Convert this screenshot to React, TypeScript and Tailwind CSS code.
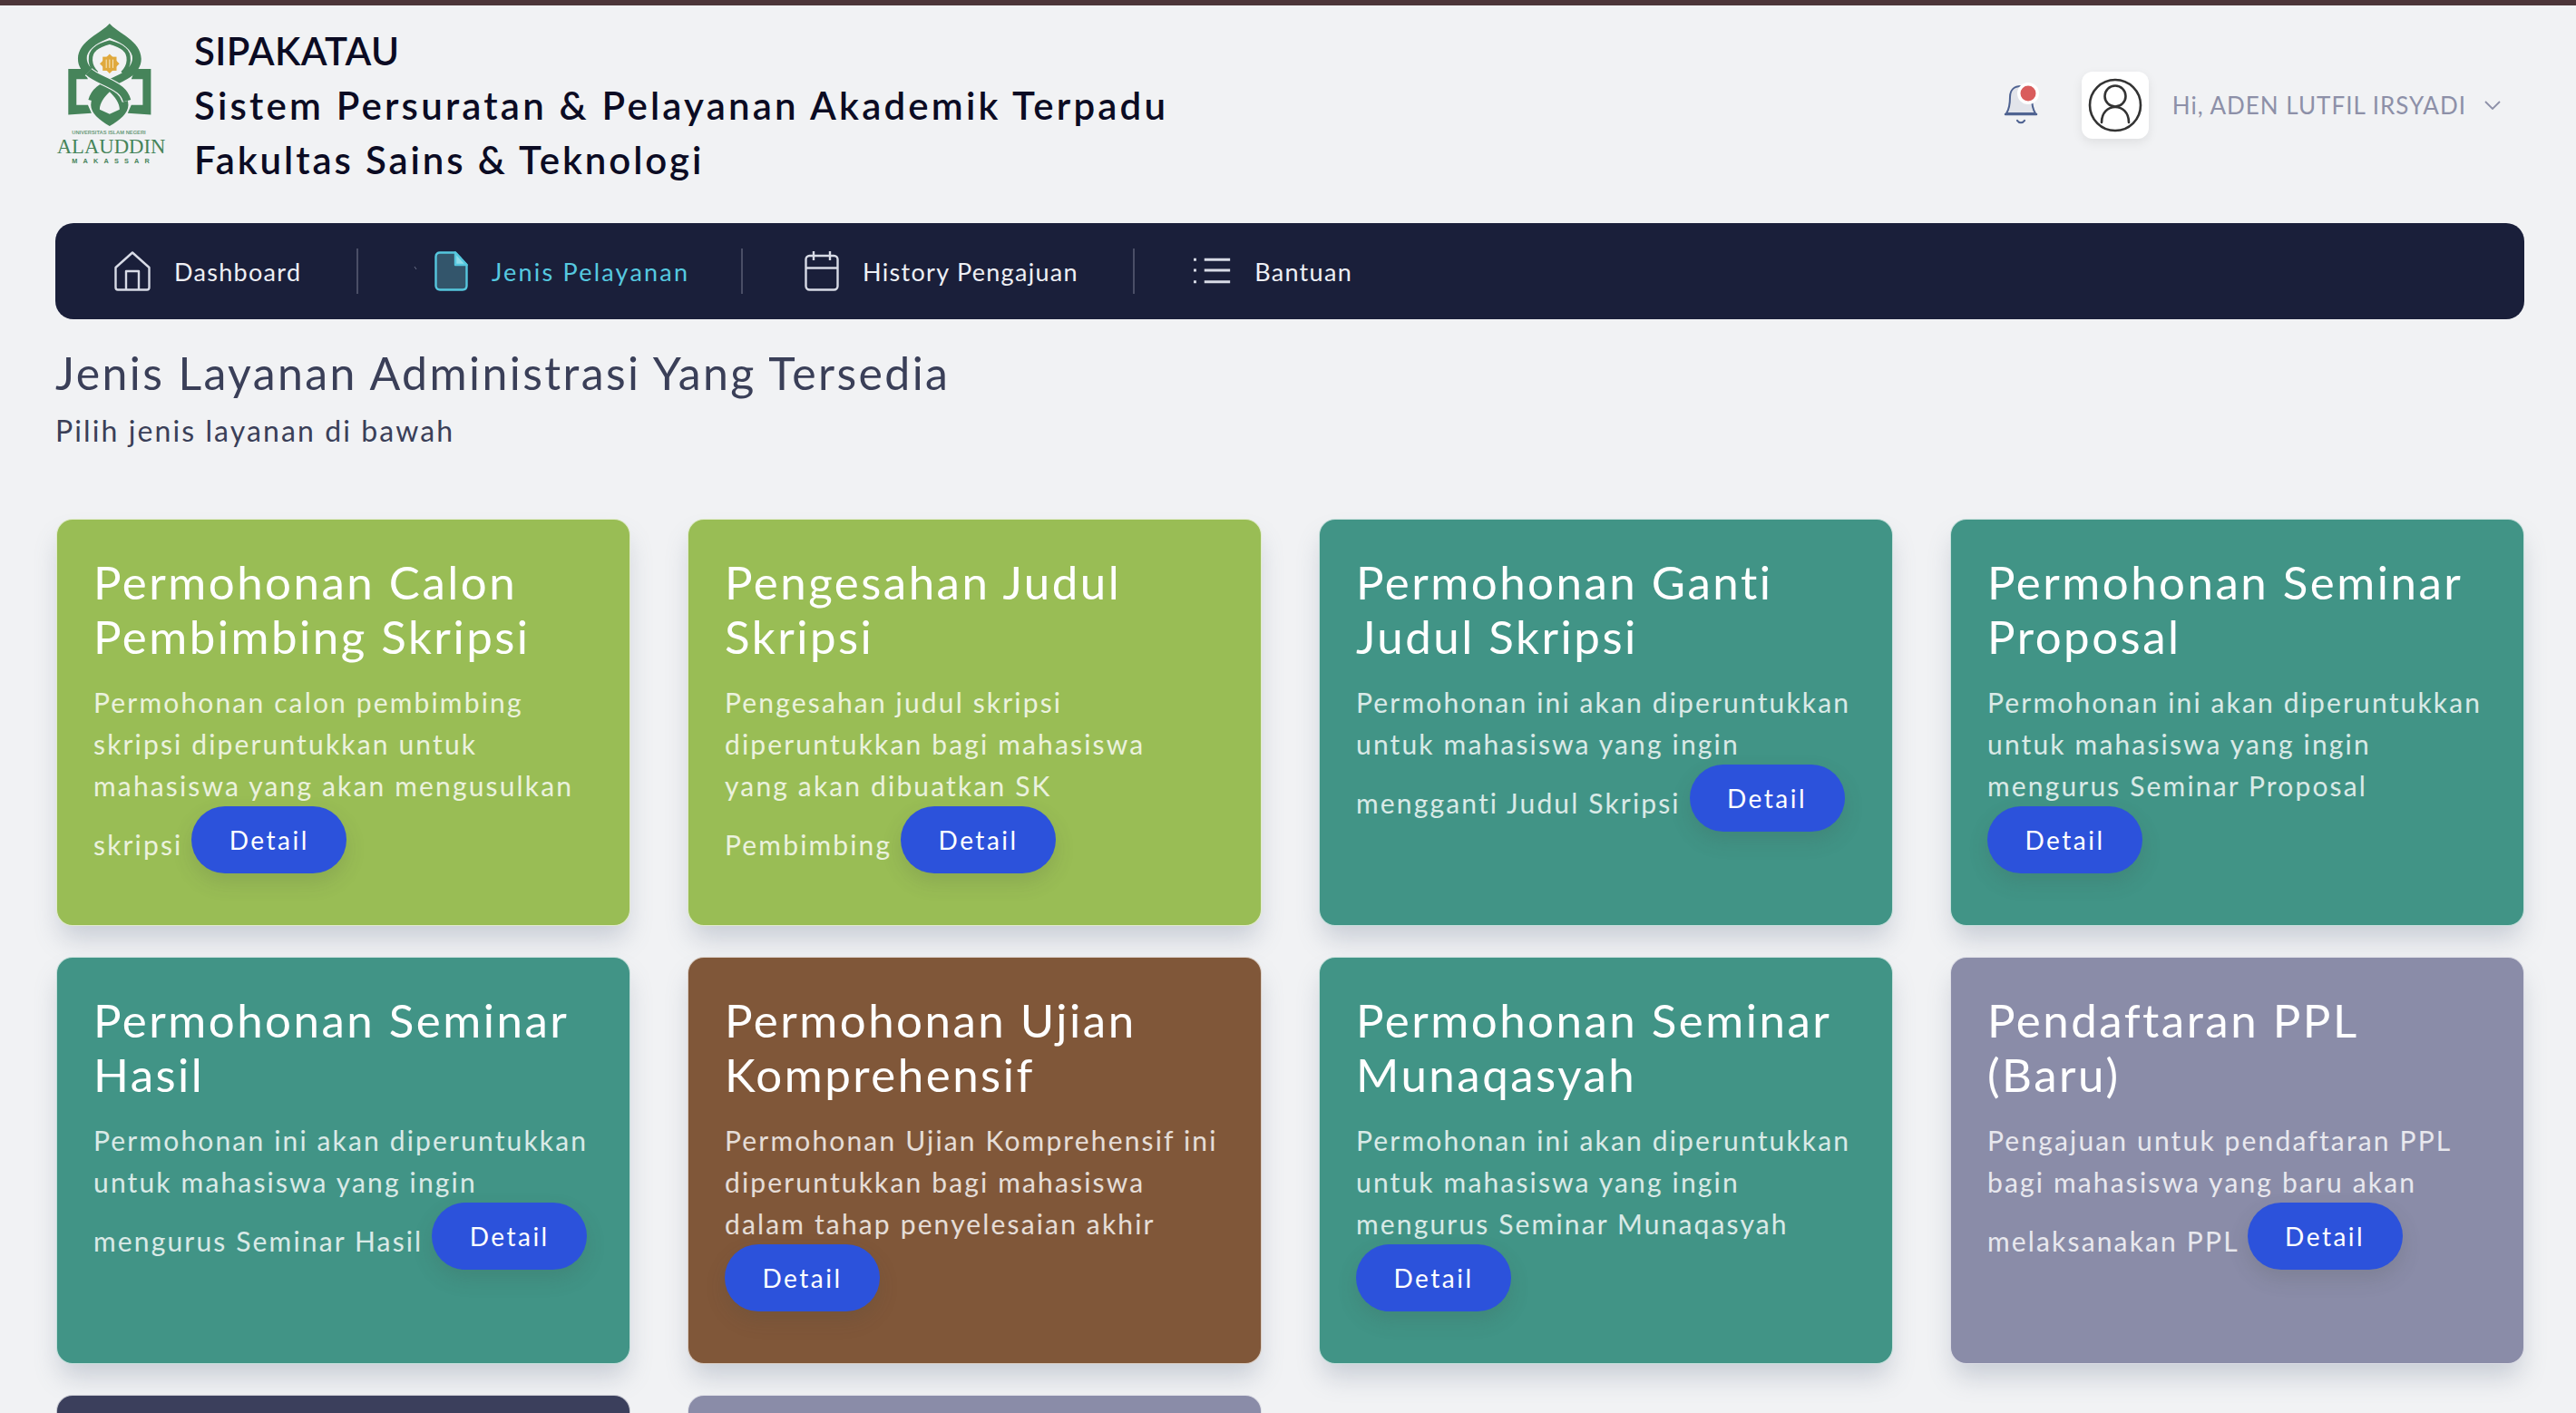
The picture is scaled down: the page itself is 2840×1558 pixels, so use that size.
import React from 'react';

interface Service {
  title: string[];
  lines: string[];
  soloButton?: boolean;
  color: string;
}

const SERVICES: Service[] = [
  { title: ['Permohonan Calon', 'Pembimbing Skripsi'], lines: ['Permohonan calon pembimbing', 'skripsi diperuntukkan untuk', 'mahasiswa yang akan mengusulkan', 'skripsi'], color: 'bg-[#99bd55]' },
  { title: ['Pengesahan Judul', 'Skripsi'], lines: ['Pengesahan judul skripsi', 'diperuntukkan bagi mahasiswa', 'yang akan dibuatkan SK', 'Pembimbing'], color: 'bg-[#99bd55]' },
  { title: ['Permohonan Ganti', 'Judul Skripsi'], lines: ['Permohonan ini akan diperuntukkan', 'untuk mahasiswa yang ingin', 'mengganti Judul Skripsi'], color: 'bg-[#419486]' },
  { title: ['Permohonan Seminar', 'Proposal'], lines: ['Permohonan ini akan diperuntukkan', 'untuk mahasiswa yang ingin', 'mengurus Seminar Proposal'], soloButton: true, color: 'bg-[#419486]' },
  { title: ['Permohonan Seminar', 'Hasil'], lines: ['Permohonan ini akan diperuntukkan', 'untuk mahasiswa yang ingin', 'mengurus Seminar Hasil'], color: 'bg-[#419486]' },
  { title: ['Permohonan Ujian', 'Komprehensif'], lines: ['Permohonan Ujian Komprehensif ini', 'diperuntukkan bagi mahasiswa', 'dalam tahap penyelesaian akhir'], soloButton: true, color: 'bg-[#805739]' },
  { title: ['Permohonan Seminar', 'Munaqasyah'], lines: ['Permohonan ini akan diperuntukkan', 'untuk mahasiswa yang ingin', 'mengurus Seminar Munaqasyah'], soloButton: true, color: 'bg-[#419486]' },
  { title: ['Pendaftaran PPL', '(Baru)'], lines: ['Pengajuan untuk pendaftaran PPL', 'bagi mahasiswa yang baru akan', 'melaksanakan PPL'], color: 'bg-[#8a8ca8]' },
];

const Logo = () => (
  <svg viewBox="60 45 370 475" className="w-[123px] h-[158px] shrink-0">
    <g fill="#46845a">
      <path d="M240 48C215 78 135 105 135 165C135 190 150 210 168 222L190 205C170 190 162 175 165 155C172 125 210 108 240 95C270 108 308 125 315 155C318 175 310 190 290 205L312 222C330 210 345 190 345 165C345 105 265 78 240 48Z" />
      <polygon points="103,198 155,198 168,232 130,232 130,318 168,318 180,345 103,350" />
      <polygon points="377,198 325,198 312,232 350,232 350,318 312,318 300,345 377,350" />
    </g>
    <path d="M198 212C172 190 170 150 192 132C205 120 225 114 240 110C255 114 275 120 288 132C310 150 308 190 282 212" fill="none" stroke="#46845a" strokeWidth="13" />
    {/* knot: bowl with a pointed opening, then the two crossing ribbons */}
    <path d="M240 240C205 262 178 285 178 318C178 345 205 368 240 388C275 368 302 345 302 318C302 285 275 262 240 240Z" fill="#46845a" />
    <path d="M240 274C222 292 207 310 207 333L240 348L273 333C273 310 258 292 240 274Z" fill="#f1f2f4" />
    <path d="M310 208C285 232 240 240 205 268C194 277 186 290 182 304" fill="none" stroke="#46845a" strokeWidth="26" />
    <path d="M170 208C195 232 240 240 275 268C286 277 294 290 298 304" fill="none" stroke="#f1f2f4" strokeWidth="33" />
    <path d="M170 208C195 232 240 240 275 268C286 277 294 290 298 304" fill="none" stroke="#46845a" strokeWidth="26" />
    <g fill="#e0a93d">
      <rect x="217" y="158" width="46" height="46" />
      <rect x="217" y="158" width="46" height="46" transform="rotate(45 240 181)" />
    </g>
    <path d="M229 167v28M240 167v28M251 167v28" stroke="#f7e7c4" strokeWidth="3" fill="none" />
    <text x="115" y="416" textLength="245" lengthAdjust="spacingAndGlyphs" className="font-['Liberation_Sans',sans-serif] font-bold text-[17px] fill-[#6d9c7d]">UNIVERSITAS ISLAM NEGERI</text>
    <text x="65" y="478" textLength="360" lengthAdjust="spacingAndGlyphs" className="font-['Liberation_Serif',serif] text-[68px] fill-[#46845a]">ALAUDDIN</text>
    <text x="115" y="512" textLength="257" className="font-['Liberation_Sans',sans-serif] font-bold text-[22px] fill-[#46845a]">MAKASSAR</text>
  </svg>
);

const BellIcon = () => (
  <svg viewBox="0 0 40 50" className="w-[40px] h-[50px]">
    <path d="M4 34C8 28 8 22 8 16C8 8 13 4 20 4C27 4 32 8 32 16C32 22 32 28 36 34Z" fill="#e2e4ea" stroke="#4f6391" strokeWidth="2" strokeLinejoin="round" />
    <path d="M3 35H37" stroke="#4f6391" strokeWidth="2.5" strokeLinecap="round" />
    <path d="M16 42C18 45 22 45 24 42" stroke="#4f6391" strokeWidth="2.2" fill="none" strokeLinecap="round" />
    <circle cx="28" cy="12" r="12" fill="#ffffff" />
    <circle cx="28" cy="12" r="8.5" fill="#d95c5c" />
  </svg>
);

const AvatarIcon = () => (
  <svg viewBox="0 0 60 60" className="w-[60px] h-[60px]" fill="none" stroke="#333333" strokeWidth="2.6" strokeLinecap="round">
    <circle cx="30" cy="30" r="28" />
    <circle cx="30" cy="20" r="11.5" />
    <path d="M15 49C15 38 22 32 30 32C38 32 45 38 45 49" />
  </svg>
);

const navStroke = '#d8dbe6';

const HomeIcon = () => (
  <svg viewBox="0 0 40 44" className="w-[40px] h-[44px]" fill="none" stroke={navStroke} strokeWidth="2.4" strokeLinejoin="round">
    <path d="M20 1.5L1.5 18V40C1.5 41.5 2.5 42.5 4 42.5H36C37.5 42.5 38.5 41.5 38.5 40V18Z" />
    <path d="M13 42V22H27V42" />
  </svg>
);

const FileIcon = () => (
  <svg viewBox="0 0 37 44" className="w-[37px] h-[44px] overflow-visible" strokeLinejoin="round">
    <path d="M-22 17L-20 20" stroke="#6b7088" strokeWidth="1" fill="none" />
    <path d="M6 1.5H23L35.5 15V38C35.5 41 33.5 42.5 31 42.5H6C3.5 42.5 1.5 41 1.5 38V6C1.5 3 3.5 1.5 6 1.5Z" fill="#33556b" stroke="#56c7de" strokeWidth="2.4" />
    <path d="M23 1.5V15H35.5Z" fill="#8fdcea" stroke="#56c7de" strokeWidth="2.4" />
  </svg>
);

const CalendarIcon = () => (
  <svg viewBox="0 0 38 44" className="w-[38px] h-[44px]" fill="none" stroke={navStroke} strokeWidth="2.4">
    <rect x="1.5" y="5" width="35" height="37.5" rx="4" />
    <path d="M1.5 18.5H36.5M10 0V10M28 0V10" />
  </svg>
);

const ListIcon = () => (
  <svg viewBox="0 0 42 44" className="w-[42px] h-[44px]" fill="none" stroke={navStroke} strokeWidth="3">
    <path d="M0 9H3M0 21H3M0 34H3M12 9H41M12 21H41M12 34H41" />
  </svg>
);

const NAV_ITEMS = [
  { label: 'Dashboard', Icon: HomeIcon, width: 'w-[334px]', pad: 'pl-[65px]' },
  { label: 'Jenis Pelayanan', Icon: FileIcon, width: 'w-[424px]', pad: 'pl-[84px]', active: true },
  { label: 'History Pengajuan', Icon: CalendarIcon, width: 'w-[432px]', pad: 'pl-[68px]' },
  { label: 'Bantuan', Icon: ListIcon, width: 'w-[240px]', pad: 'pl-[65px]', last: true },
];

const Card: React.FC<{ service: Service }> = ({ service }) => (
  <div className={`${service.color} h-[449px] rounded-[18px] border-[1.5px] border-white/70 px-[40px] pt-[39px] text-white shadow-[0_18px_28px_-4px_rgba(110,122,145,0.3)]`}>
    <h3 className="text-[51px] leading-[60px] tracking-[2.5px]">
      {service.title[0]}
      <br />
      {service.title[1]}
    </h3>
    <p className="mt-[19px] whitespace-nowrap text-[30px] leading-[46px] tracking-[2.15px] text-white/80">
      {service.lines.map((line, i) => (
        <React.Fragment key={line}>
          {line}
          {i < service.lines.length - 1 || service.soloButton ? <br /> : ' '}
        </React.Fragment>
      ))}
      <button className="mb-[18px] inline-block h-[74px] w-[171px] rounded-full bg-[#2c52db] align-middle text-[28px] tracking-[2.5px] text-white shadow-[0_10px_22px_rgba(60,70,60,0.16)]">
        Detail
      </button>
    </p>
  </div>
);

export default function App() {
  return (
    <div className="h-screen overflow-hidden bg-[#f1f2f4] pl-[61px] pr-[57px] font-['Lato',sans-serif]">
      <div className="-ml-[61px] -mr-[57px] h-[6px] bg-[#4d3539]" />

      <header className="mb-[20px] flex h-[220px] items-center">
        <div className="mb-[24px]">
          <Logo />
        </div>
        <div className="ml-[30px] text-[42px] font-semibold leading-[60px] text-[#0b0b23]">
          <div className="tracking-[0.4px]">SIPAKATAU</div>
          <div className="tracking-[3.2px]">Sistem Persuratan &amp; Pelayanan Akademik Terpadu</div>
          <div className="tracking-[2.9px]">Fakultas Sains &amp; Teknologi</div>
        </div>
        <div className="ml-auto flex items-center pr-[26px]">
          <BellIcon />
          <div className="ml-[47px] flex h-[74px] w-[74px] items-center justify-center rounded-[12px] bg-white shadow-[0_4px_12px_rgba(0,0,0,0.08)]">
            <AvatarIcon />
          </div>
          <span className="ml-[26px] text-[26px] tracking-[1px] text-[#8d90a8]">Hi, ADEN LUTFIL IRSYADI</span>
          <svg viewBox="0 0 18 10" className="ml-[20px] w-[18px] h-[10px]" fill="none" stroke="#8d90a8" strokeWidth="1.8">
            <path d="M1 1L9 9L17 1" />
          </svg>
        </div>
      </header>

      <nav className="flex h-[106px] items-center rounded-[20px] bg-[#1a1f3a]">
        {NAV_ITEMS.map(({ label, Icon, width, pad, active, last }) => (
          <div key={label} className={`flex h-[50px] items-center gap-[26px] ${width} ${pad} ${last ? '' : 'border-r-2 border-[#4a4e66]'}`}>
            <Icon />
            <span className={`pt-[2px] text-[27px] ${active ? 'tracking-[2.2px] text-[#56c9e0]' : 'tracking-[1.3px] text-[#eef0f5]'}`}>{label}</span>
          </div>
        ))}
      </nav>

      <h1 className="mt-[26px] text-[50px] leading-[66px] tracking-[2.4px] text-[#3a3f58]">Jenis Layanan Administrasi Yang Tersedia</h1>
      <p className="mt-[9px] text-[32px] leading-[44px] tracking-[2.1px] text-[#3a3f58]">Pilih jenis layanan di bawah</p>

      <div className="mt-[75px] grid grid-cols-4 gap-x-[63px] gap-y-[34px] pl-[1px]">
        {SERVICES.map(service => (
          <Card key={service.title.join(' ')} service={service} />
        ))}
        <div className="h-[449px] rounded-[18px] border-[1.5px] border-white/70 bg-[#3b3f5c]" />
        <div className="h-[449px] rounded-[18px] border-[1.5px] border-white/70 bg-[#8a8ca8]" />
      </div>
    </div>
  );
}
